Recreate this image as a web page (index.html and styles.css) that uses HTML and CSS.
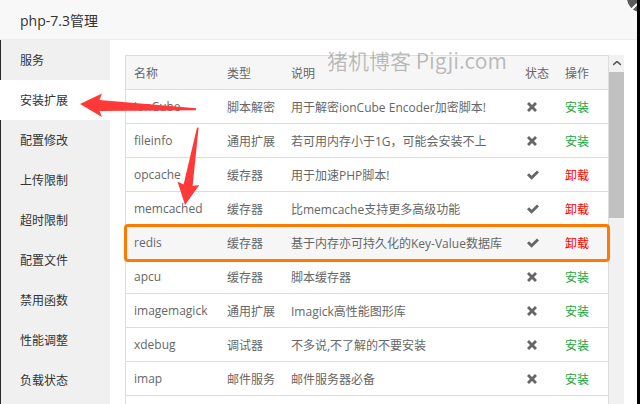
FILE: index.html
```html
<!DOCTYPE html>
<html lang="zh-CN">
<head>
<meta charset="utf-8">
<title>php-7.3管理</title>
<link rel="stylesheet" href="styles.css">
</head>
<body>
<div class="layer">
  <div class="title">php-7.3管理</div>
  <div class="body">
    <ul class="menu">
      <li>服务</li>
      <li class="active">安装扩展</li>
      <li>配置修改</li>
      <li>上传限制</li>
      <li>超时限制</li>
      <li>配置文件</li>
      <li>禁用函数</li>
      <li>性能调整</li>
      <li>负载状态</li>
    </ul>
    <div class="main">
      <div class="grid">
        <div class="row head"><span>名称</span><span>类型</span><span>说明</span><span>状态</span><span>操作</span></div>
        <div class="row"><span>ionCube</span><span>脚本解密</span><span>用于解密ionCube Encoder加密脚本!</span><span class="st"><svg class="ico" viewBox="0 0 10 10"><path d="M2 0L5 3L8 0L10 2L7 5L10 8L8 10L5 7L2 10L0 8L3 5L0 2Z"/></svg></span><span class="ins">安装</span></div>
        <div class="row"><span>fileinfo</span><span>通用扩展</span><span>若可用内存小于1G，可能会安装不上</span><span class="st"><svg class="ico" viewBox="0 0 10 10"><path d="M2 0L5 3L8 0L10 2L7 5L10 8L8 10L5 7L2 10L0 8L3 5L0 2Z"/></svg></span><span class="ins">安装</span></div>
        <div class="row"><span>opcache</span><span>缓存器</span><span>用于加速PHP脚本!</span><span class="st"><svg class="ico chk" viewBox="0 0 12 10"><path d="M0 5.2L2 3.2L4.6 5.8L10 0.4L12 2.4L4.6 9.8Z"/></svg></span><span class="uni">卸载</span></div>
        <div class="row"><span>memcached</span><span>缓存器</span><span>比memcache支持更多高级功能</span><span class="st"><svg class="ico chk" viewBox="0 0 12 10"><path d="M0 5.2L2 3.2L4.6 5.8L10 0.4L12 2.4L4.6 9.8Z"/></svg></span><span class="uni">卸载</span></div>
        <div class="row hl"><span>redis</span><span>缓存器</span><span>基于内存亦可持久化的Key-Value数据库</span><span class="st"><svg class="ico chk" viewBox="0 0 12 10"><path d="M0 5.2L2 3.2L4.6 5.8L10 0.4L12 2.4L4.6 9.8Z"/></svg></span><span class="uni">卸载</span></div>
        <div class="row"><span>apcu</span><span>缓存器</span><span>脚本缓存器</span><span class="st"><svg class="ico" viewBox="0 0 10 10"><path d="M2 0L5 3L8 0L10 2L7 5L10 8L8 10L5 7L2 10L0 8L3 5L0 2Z"/></svg></span><span class="ins">安装</span></div>
        <div class="row"><span>imagemagick</span><span>通用扩展</span><span>Imagick高性能图形库</span><span class="st"><svg class="ico" viewBox="0 0 10 10"><path d="M2 0L5 3L8 0L10 2L7 5L10 8L8 10L5 7L2 10L0 8L3 5L0 2Z"/></svg></span><span class="ins">安装</span></div>
        <div class="row"><span>xdebug</span><span>调试器</span><span>不多说,不了解的不要安装</span><span class="st"><svg class="ico" viewBox="0 0 10 10"><path d="M2 0L5 3L8 0L10 2L7 5L10 8L8 10L5 7L2 10L0 8L3 5L0 2Z"/></svg></span><span class="ins">安装</span></div>
        <div class="row"><span>imap</span><span>邮件服务</span><span>邮件服务器必备</span><span class="st"><svg class="ico" viewBox="0 0 10 10"><path d="M2 0L5 3L8 0L10 2L7 5L10 8L8 10L5 7L2 10L0 8L3 5L0 2Z"/></svg></span><span class="ins">安装</span></div>
        <div class="row empty"></div>
      </div>
      <div class="scrollbar">
        <div class="sb-up"><svg viewBox="0 0 8 5" class="caret"><path d="M0 4L4 0.5L8 4" fill="none" stroke="#505050" stroke-width="1.6"/></svg></div>
        <div class="sb-thumb"></div>
      </div>
    </div>
  </div>
  <div class="watermark">猪机博客 Pigji.com</div>
  <svg class="overlay" width="637" height="404" viewBox="0 0 637 404">
    <circle cx="641" cy="-2" r="14" fill="#5b5b5b"/>
    <path d="M631 10L637 4" stroke="#fff" stroke-width="2"/>
    <polygon fill="#ff3838" points="80,104 102,93.5 99.5,100 196,108.2 196,110.2 99.5,111 102,117"/>
    <polygon fill="#ff3838" points="185,205 177.5,181.6 183.6,184.6 197,127.5 198.6,127.7 192.6,186 199.3,185"/>
  </svg>
</div>
</body>
</html>
```

FILE: styles.css
```css
* { box-sizing: border-box; }
html, body { margin: 0; padding: 0; }
body {
  width: 640px;
  height: 404px;
  overflow: hidden;
  background: #000;
  font-family: "Open Sans", "Noto Sans CJK SC", sans-serif;
  font-size: 12px;
  color: #666;
}
.layer {
  position: relative;
  width: 637px;
  height: 404px;
  background: #fff;
  overflow: hidden;
  display: flex;
  flex-direction: column;
}
.title {
  height: 40px;
  flex: none;
  background: #f8f8f8;
  border-bottom: 1px solid #eee;
  padding-left: 20px;
  line-height: 41px;
  font-size: 14px;
  color: #333;
}
.body {
  flex: 1;
  display: flex;
  min-height: 0;
}
.menu {
  list-style: none;
  margin: 0;
  padding: 0;
  width: 110px;
  flex: none;
  background: #f0f0f0;
  box-shadow: inset 1px 0 #2a2a2a;
}
.menu li {
  height: 40px;
  line-height: 41px;
  padding-left: 20px;
  color: #333;
  font-size: 12px;
}
.menu li.active {
  background: #fff;
}
.main {
  flex: 1;
  display: flex;
  align-items: flex-start;
  padding: 15px 13px 0 15px;
}
.grid {
  width: 484px;
  border: 1px solid #ddd;
  border-bottom: none;
}
.row {
  display: grid;
  grid-template-columns: 93px 64px 234px 40px 1fr;
  height: 34px;
  border-bottom: 1px solid #ddd;
  align-items: center;
  background: #fff;
}
.row span {
  padding-left: 8px;
  white-space: nowrap;
}
.row.head {
  background: #f6f6f6;
}
.row.hl {
  background: #f6f6f6;
  outline: 3.5px solid #ff7a00;
  outline-offset: -1px;
  border-radius: 2px;
  position: relative;
}
.st { display: flex; align-items: center; padding-left: 10px !important; }
.ico { width: 10px; height: 10px; fill: #666; display: block; }
.ico.chk { width: 12px; height: 10px; }
.ins { color: #20a53a; }
.uni { color: #ff0000; }
.scrollbar {
  width: 15px;
  height: 349px;
  flex: none;
  background: #f1f1f1;
}
.sb-up {
  height: 17px;
  display: flex;
  align-items: center;
  justify-content: center;
}
.caret { width: 8px; height: 5px; display: block; }
.sb-thumb {
  height: 146px;
  background: #c1c1c1;
}
.watermark {
  position: absolute;
  left: 327px;
  top: 45px;
  font-family: "Noto Sans CJK SC", sans-serif;
  font-size: 21px;
  line-height: 30px;
  color: rgba(0, 0, 0, 0.25);
  white-space: nowrap;
}
.overlay {
  position: absolute;
  left: 0;
  top: 0;
  pointer-events: none;
}
```
